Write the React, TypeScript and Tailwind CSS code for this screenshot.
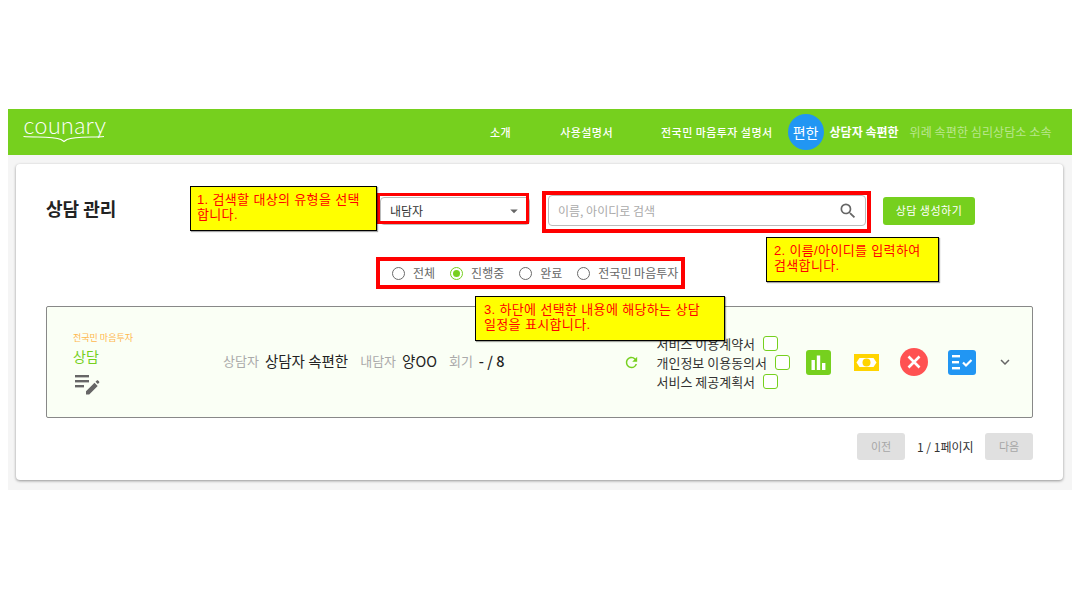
import { MdRefresh, MdSearch, MdExpandMore, MdArrowDropDown } from "react-icons/md";

const kr = "font-['Noto_Sans_CJK_KR','Noto_Sans',sans-serif]";

function Radio({ label, on }: { label: string; on?: boolean }) {
  return (
    <div className="flex items-center">
      <span className={`flex h-[13px] w-[13px] items-center justify-center rounded-full border-[1.5px] ${on ? "border-[#76d01e]" : "border-[#6b6b6b]"}`}>
        {on && <span className="h-[7px] w-[7px] rounded-full bg-[#76d01e]" />}
      </span>
      <span className="ml-2 text-[12px] text-[#666]">{label}</span>
    </div>
  );
}

function Check({ label }: { label: string }) {
  return (
    <div className="flex h-[19px] items-center gap-[8px]">
      <span className="text-[13px] leading-none text-[#333]">{label}</span>
      <span className="h-[15px] w-[15px] rounded-[3px] border-[1.5px] border-[#76d01e] bg-white" />
    </div>
  );
}

function Note({ className, children }: { className: string; children: React.ReactNode }) {
  return (
    <div className={`absolute z-20 whitespace-nowrap border border-black bg-[#ffff00] text-[13px] leading-[15px] tracking-[0.35px] text-[#ff0000] font-['Liberation_Sans','Noto_Sans_CJK_KR',sans-serif] shadow-[1px_1px_1px_rgba(0,0,0,0.35)] ${className}`}>
      {children}
    </div>
  );
}

export default function App() {
  return (
    <div className={`relative h-[608px] w-[1080px] overflow-hidden bg-white ${kr}`}>
      <div className="ml-2 flex h-[490px] w-[1064px] flex-col pt-[109px]">
        <header className="flex h-[46px] shrink-0 items-center bg-[#76d01e]">
          <div className="relative mb-[4px] ml-[15px] h-[34px] w-[84px] text-white">
            <span className="block text-center text-[23px] font-light leading-[24px] tracking-[0.5px] font-['Lato',sans-serif]">counary</span>
            <svg className="absolute left-0 top-[21px]" width="84" height="10" viewBox="0 0 84 10" fill="none">
              <path d="M0.5 2.5C14 3.5 30 2 38 5.5L41 7.5L44 5.5C52 2 70 3.5 81 2.5" stroke="white" strokeWidth="1.1" />
            </svg>
          </div>
          <nav className="flex items-center text-[11px] font-medium tracking-[0.45px] text-white">
            <span className="ml-[383px]">소개</span>
            <span className="ml-[49px]">사용설명서</span>
            <span className="ml-[48px]">전국민 마음투자 설명서</span>
          </nav>
          <div className="ml-[15px] flex h-[36px] w-[36px] items-center justify-center rounded-full bg-[#2196f3] text-[14px] text-white">편한</div>
          <span className="ml-[6px] text-[12px] font-bold text-white">상담자 속편한</span>
          <span className="ml-[11px] text-[12px] tracking-[0.1px] text-white/50">위례 속편한 심리상담소 소속</span>
        </header>
        <main className="flex-1 bg-[#f5f5f5] pb-[10px] pl-2 pr-[9px] pt-[9px]">
          <section className="h-[316px] rounded-[4px] bg-white px-[30px] pt-[31px] shadow-[0_1px_3px_rgba(0,0,0,0.4)]">
            <div className="flex h-[31px] items-center">
              <h1 className="mb-[5px] w-[334px] text-[18px] font-bold text-[#222]">상담 관리</h1>
              <div className="flex h-[28px] w-[150px] items-center justify-between rounded-[4px] border border-[#bbb] pl-[9px] pr-[6px] text-[12px] text-[#333]">
                내담자
                <MdArrowDropDown className="text-[18px] text-[#666]" />
              </div>
              <div className="ml-[18px] flex h-[31px] w-[318px] items-center justify-between rounded-[4px] border border-[#bbb] pl-[9px] pr-[7px] text-[12px] text-[#aaa]">
                이름, 아이디로 검색
                <MdSearch className="text-[20px] text-[#666]" />
              </div>
              <button className="ml-[17px] h-[28px] w-[92px] rounded-[3px] bg-[#76d01e] text-[11px] tracking-[0.5px] text-white">상담 생성하기</button>
            </div>
            <div className="mt-[37px] flex h-[20px] items-center gap-[15px] pl-[346px]">
              <Radio label="전체" />
              <Radio label="진행중" on />
              <Radio label="완료" />
              <Radio label="전국민 마음투자" />
            </div>
            <article className="mt-[23px] flex h-[112px] items-center rounded-[2px] border border-[#888] bg-[#fafff5]">
              <div className="ml-[26px] mt-[4px] flex w-[150px] flex-col">
                <span className="text-[9px] leading-[12px] text-[#ffb74d]">전국민 마음투자</span>
                <span className="mt-[2px] text-[14px] leading-[20px] text-[#76d01e]">상담</span>
                <svg className="ml-[1px] mt-[8px]" width="26" height="22" viewBox="0 0 26 22" fill="#666">
                  <rect x="1" y="1" width="14" height="2.4" />
                  <rect x="1" y="6" width="14" height="2.4" />
                  <rect x="1" y="11" width="9" height="2.4" />
                  <path d="M12 20.5v-3.2l8.5-8.5 3.2 3.2-8.5 8.5zM21.5 7.8l1.3-1.3c.4-.4.9-.4 1.3 0l1 1c.4.4.4.9 0 1.3l-1.3 1.3z" />
                </svg>
              </div>
              <div className="mb-[2px] flex items-center text-[14.5px] text-[#222]">
                <span className="text-[13px] text-[#aaa]">상담자</span>
                <span className="ml-[6px]">상담자 속편한</span>
                <span className="ml-[12px] text-[13px] text-[#aaa]">내담자</span>
                <span className="ml-[6px]">양OO</span>
                <span className="ml-[12px] text-[13px] text-[#aaa]">회기</span>
                <span className="ml-[6px] font-medium">- / 8</span>
              </div>
              <MdRefresh className="ml-[119px] text-[17px] text-[#76d01e]" />
              <div className="ml-[16px] flex w-[150px] flex-col">
                <Check label="서비스 이용계약서" />
                <Check label="개인정보 이용동의서" />
                <Check label="서비스 제공계획서" />
              </div>
              <svg width="25" height="25" viewBox="0 0 25 25">
                <rect width="25" height="25" rx="3" fill="#76d01e" />
                <rect x="5.5" y="10" width="3.4" height="10" fill="#fff" />
                <rect x="10.8" y="5.5" width="3.4" height="14.5" fill="#fff" />
                <rect x="16" y="13" width="3.4" height="7" fill="#fff" />
              </svg>
              <svg className="ml-[23px]" width="25" height="17" viewBox="0 0 25 17">
                <rect width="25" height="17" fill="#ffd400" />
                <path d="M2.500 8.500L5.500 4h14l3 4.500-3 4.500h-14z" fill="#fff" />
                <circle cx="12.5" cy="8.500" r="4" fill="#ffd400" />
              </svg>
              <svg className="ml-[21px]" width="28" height="28" viewBox="0 0 28 28">
                <circle cx="14" cy="14" r="14" fill="#ff5252" />
                <path d="M8.500 8.500l11 11M19.500 8.500l-11 11" stroke="#fff" strokeWidth="2.600" />
              </svg>
              <svg className="ml-[20px]" width="28" height="25" viewBox="0 0 28 25">
                <rect width="28" height="25" rx="3" fill="#2196f3" />
                <rect x="4" y="5" width="8" height="2.400" fill="#fff" />
                <rect x="4" y="11" width="7" height="2.400" fill="#fff" />
                <rect x="4" y="17" width="8" height="2.400" fill="#fff" />
                <path d="M15 12.500l3 3 5.500-5.500" stroke="#fff" strokeWidth="2.200" fill="none" />
              </svg>
              <MdExpandMore className="ml-[20px] text-[18px] text-[#666]" />
            </article>
            <div className="mt-[15px] flex items-center justify-end">
              <button className="h-[27px] w-[48px] rounded-[3px] bg-[#e0e0e0] text-[11px] text-[#a6a6a6]">이전</button>
              <span className="mx-[12px] w-[56px] whitespace-nowrap text-[12px] text-[#333]">1 / 1페이지</span>
              <button className="h-[27px] w-[48px] rounded-[3px] bg-[#e0e0e0] text-[11px] text-[#a6a6a6]">다음</button>
            </div>
          </section>
        </main>
      </div>

      <Note className="left-[190px] top-[186px] h-[45px] w-[187px] px-[6px] py-[5px]">1. 검색할 대상의 유형을 선택<br />합니다.</Note>
      <Note className="left-[766px] top-[237px] h-[45px] w-[173px] px-[7px] py-[5px]">2. 이름/아이디를 입력하여<br />검색합니다.</Note>
      <Note className="left-[475px] top-[296px] h-[45px] w-[250px] px-[8px] py-[5px]">3. 하단에 선택한 내용에 해당하는 상담<br />일정을 표시합니다.</Note>
      <div className="absolute left-[377px] top-[193px] z-10 h-[31px] w-[152px] border-[3px] border-[#ff0000]" />
      <div className="absolute left-[542px] top-[191px] z-10 h-[42px] w-[329px] border-[4px] border-[#ff0000]" />
      <div className="absolute left-[376px] top-[257px] z-10 h-[32px] w-[309px] border-[4px] border-[#ff0000]" />
    </div>
  );
}
